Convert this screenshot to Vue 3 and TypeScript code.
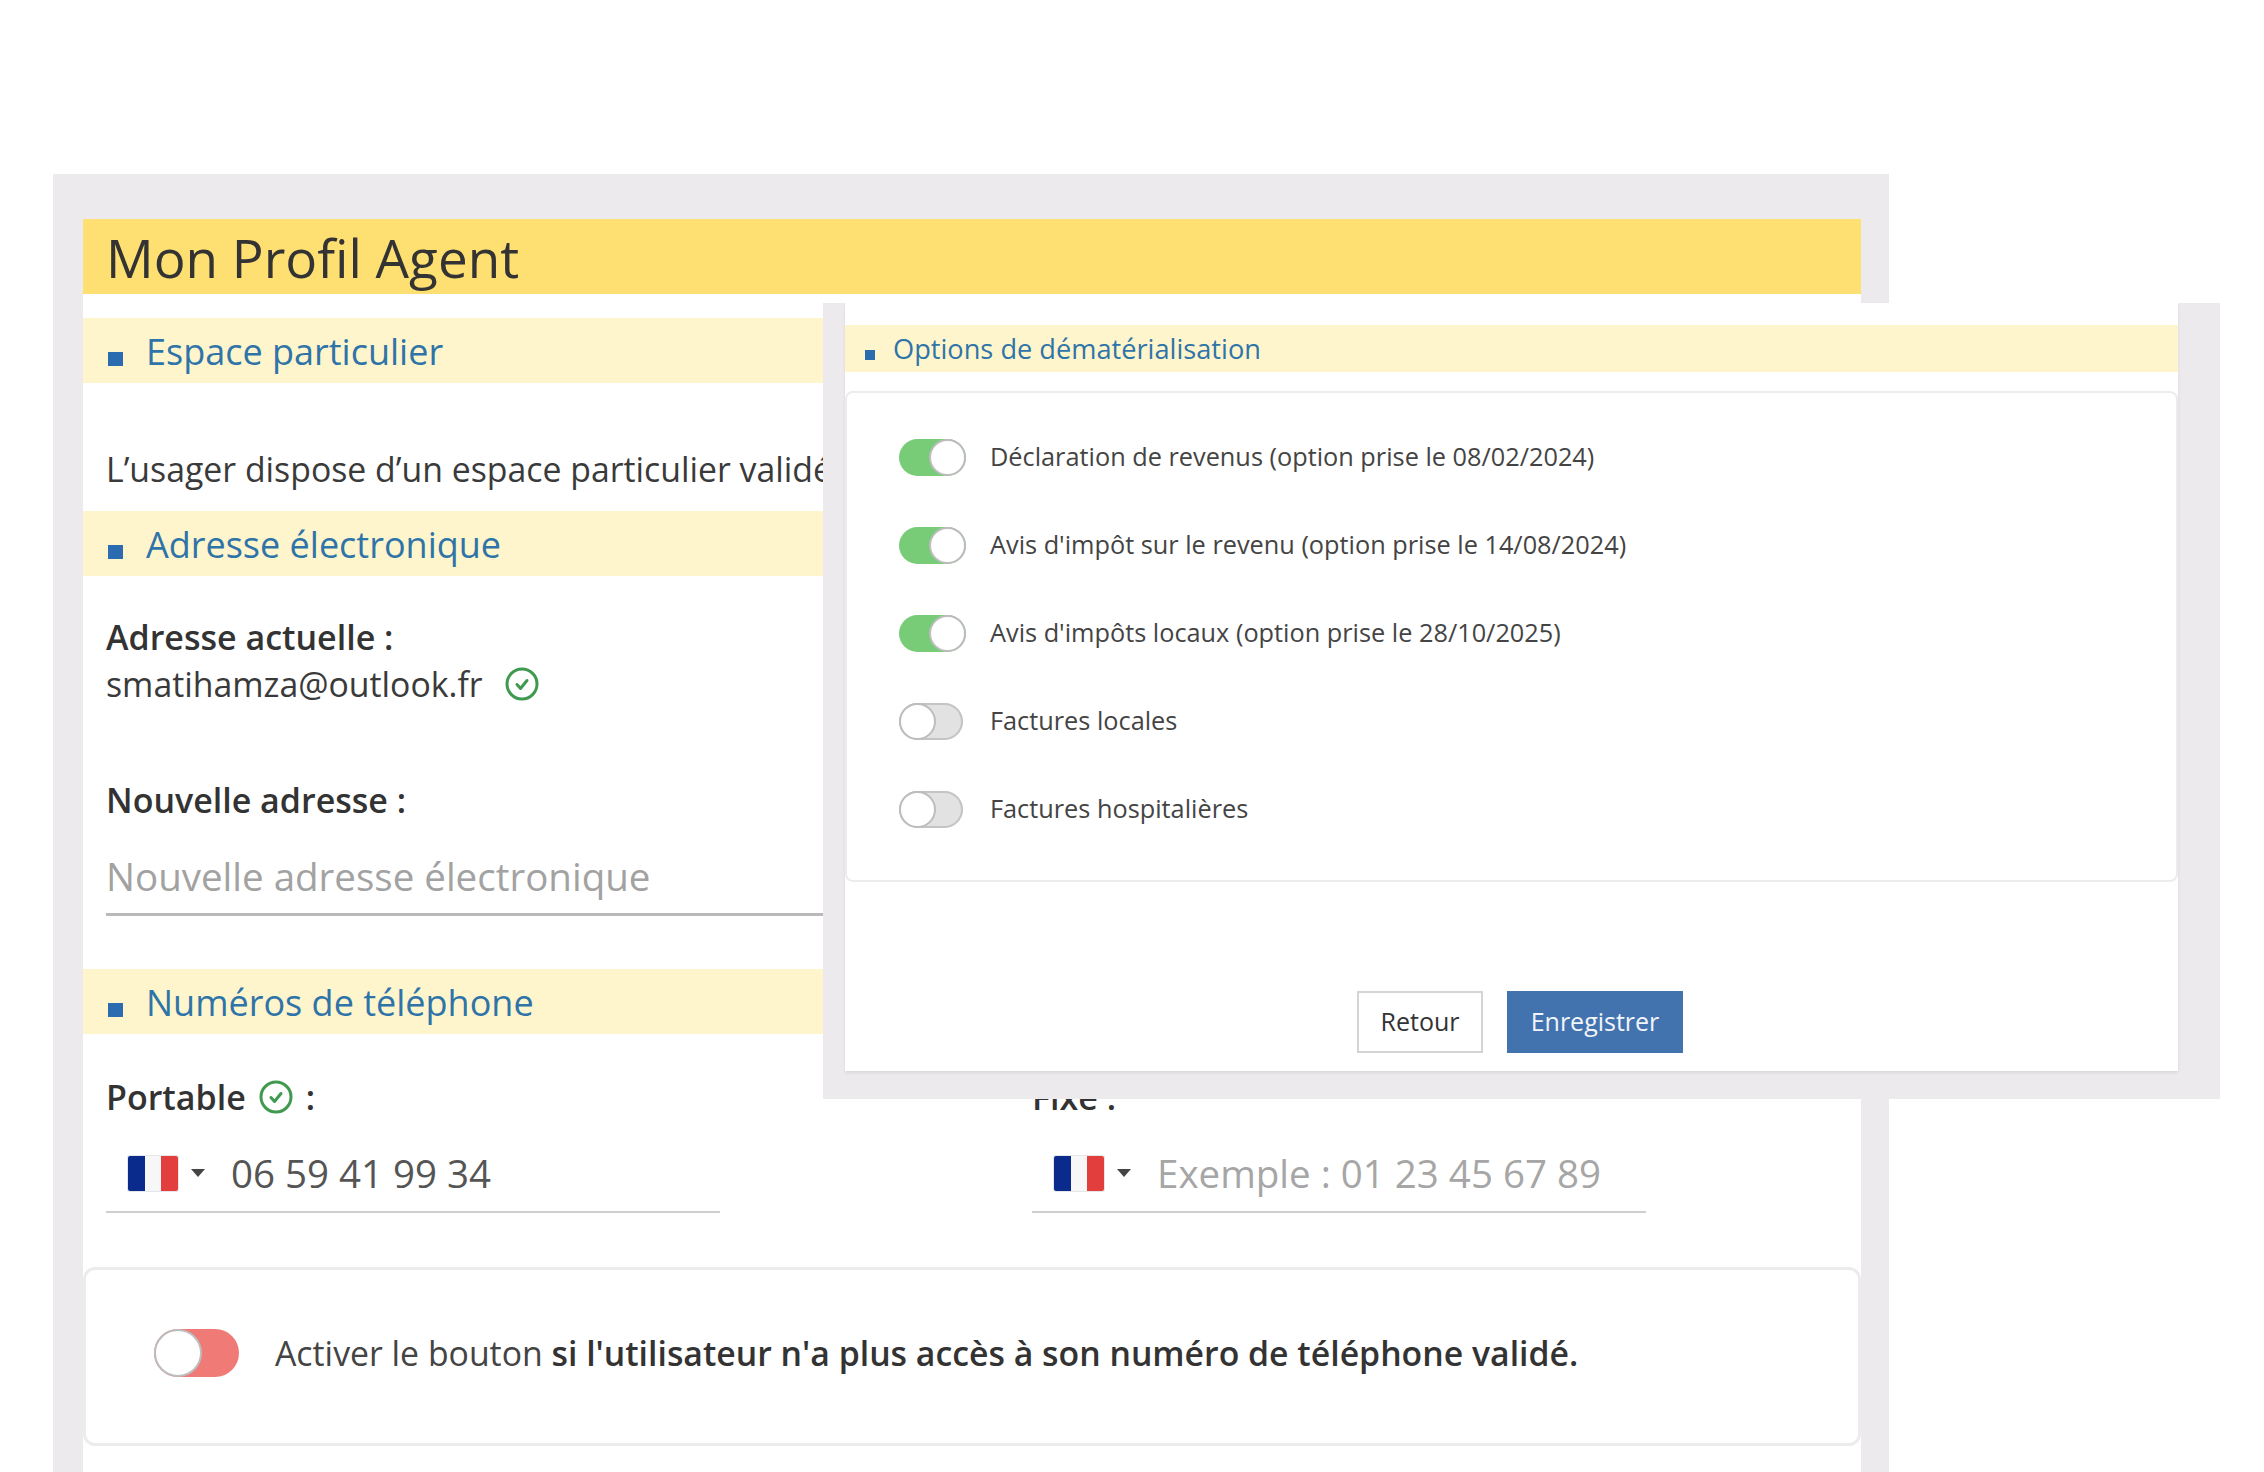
<script setup lang="ts">
interface Option {
  label: string
  on: boolean
}
const options: Option[] = [
  { label: "Déclaration de revenus (option prise le 08/02/2024)", on: true },
  { label: "Avis d'impôt sur le revenu (option prise le 14/08/2024)", on: true },
  { label: "Avis d'impôts locaux (option prise le 28/10/2025)", on: true },
  { label: "Factures locales", on: false },
  { label: "Factures hospitalières", on: false },
]
</script>

<template>
  <div class="page">
    <div class="panel">
      <main class="card">
        <h1 class="title">Mon Profil Agent</h1>

        <h2 class="section first"><i class="mark"></i>Espace particulier</h2>
        <p class="status">L’usager dispose d’un espace particulier validé.</p>

        <h2 class="section"><i class="mark"></i>Adresse électronique</h2>
        <div class="current">
          <div class="label">Adresse actuelle :</div>
          <div class="mail">
            smatihamza@outlook.fr
            <svg class="check mail-check" viewBox="0 0 36 36"><circle cx="18" cy="18" r="15" /><path d="M13 18.5l3.5 4 6.5-8" /></svg>
          </div>
        </div>
        <div class="label new-label">Nouvelle adresse :</div>
        <div class="mail-input">Nouvelle adresse électronique</div>

        <h2 class="section phones-head"><i class="mark"></i>Numéros de téléphone</h2>
        <div class="phones">
          <div class="phone mobile">
            <div class="label phone-label">
              Portable
              <svg class="check" viewBox="0 0 36 36"><circle cx="18" cy="18" r="15" /><path d="M13 18.5l3.5 4 6.5-8" /></svg>
              :
            </div>
            <div class="phone-input">
              <span class="flag"><i class="blue"></i><i class="white"></i><i class="red"></i></span>
              <span class="caret"></span>
              <span class="number">06 59 41 99 34</span>
            </div>
          </div>
          <div class="phone fixed">
            <div class="label phone-label">Fixe :</div>
            <div class="phone-input">
              <span class="flag"><i class="blue"></i><i class="white"></i><i class="red"></i></span>
              <span class="caret"></span>
              <span class="number hint">Exemple : 01 23 45 67 89</span>
            </div>
          </div>
        </div>

        <div class="lost">
          <span class="toggle big"><span class="knob"></span></span>
          <p>Activer le bouton <b>si l'utilisateur n'a plus accès à son numéro de téléphone validé.</b></p>
        </div>
      </main>
    </div>

    <aside class="modal">
      <div class="modal-body">
        <h2 class="modal-head"><i class="mark small"></i>Options de dématérialisation</h2>
        <div class="options">
          <div v-for="o in options" :key="o.label" class="option">
            <span class="toggle" :class="{ on: o.on }"><span class="knob"></span></span>
            <span class="option-text">{{ o.label }}</span>
          </div>
        </div>
        <div class="actions">
          <button class="btn back">Retour</button>
          <button class="btn save">Enregistrer</button>
        </div>
      </div>
    </aside>
  </div>
</template>

<style>
html, body { margin: 0; background: #fff; }
</style>

<style scoped>
.page {
  position: relative;
  height: 1472px;
  overflow: hidden;
  padding: 174px 0 0 53px;
  box-sizing: border-box;
  background: #fff;
  font-family: "Open Sans", "Noto Sans", sans-serif;
  color: #3a3a3a;
}
.panel {
  width: 1836px;
  height: 1298px;
  box-sizing: border-box;
  padding: 45px 28px 0 30px;
  background: #edeaee;
}
.card { height: 100%; background: #fff; overflow: hidden; }
.title {
  margin: 0;
  height: 75px;
  padding-left: 23px;
  background: #fddf72;
  font-size: 53px;
  line-height: 77px;
  font-weight: 400;
  color: #333;
}
.section {
  display: flex;
  align-items: center;
  height: 65px;
  box-sizing: border-box;
  margin: 0;
  padding: 2px 0 0 25px;
  background: #fff5cc;
  font-size: 36px;
  font-weight: 400;
  color: #2f74a8;
}
.first { margin-top: 24px; }
.mark {
  flex: none;
  width: 15px;
  height: 14px;
  margin: 15px 23px 0 0;
  background: #2b6cb0;
}
.mark.small { width: 10px; height: 10px; margin: 12px 18px 0 0; }
.status {
  margin: 0;
  height: 128px;
  box-sizing: border-box;
  padding: 64px 0 0 23px;
  font-size: 33.8px;
  line-height: 44px;
  white-space: nowrap;
}
.current { padding: 39px 0 0 23px; }
.label {
  font-size: 34px;
  line-height: 44px;
  font-weight: 600;
  color: #333;
}
.mail {
  display: flex;
  align-items: center;
  gap: 21px;
  font-size: 33.8px;
  line-height: 50px;
}
.check { width: 36px; height: 36px; flex: none; }
.check circle, .check path {
  fill: none;
  stroke: #3f9a50;
  stroke-width: 3;
}
.check path { stroke-linecap: round; stroke-linejoin: round; }
.new-label { margin: 69px 0 0 23px; }
.mail-input {
  margin: 30px 0 0 23px;
  height: 61px;
  border-bottom: 3px solid #b9b9b9;
  font-size: 38.5px;
  line-height: 48px;
  color: #a2a2a2;
}
.phones-head { margin-top: 53px; }
.phones { display: flex; padding-left: 23px; }
.phone { width: 614px; }
.fixed { margin-left: 312px; }
.phone-label {
  display: flex;
  align-items: center;
  gap: 12px;
  margin-top: 41px;
}
.phone-input {
  display: flex;
  align-items: center;
  height: 79px;
  margin-top: 15px;
  padding-left: 22px;
  box-sizing: border-box;
  border-bottom: 2px solid #cfcfcf;
}
.flag {
  display: flex;
  width: 50px;
  height: 35px;
  border-radius: 2px;
  overflow: hidden;
  flex: none;
  margin-top: 2px;
  box-shadow: 0 0 0 1px #e6e6e8;
}
.flag i { flex: 1; }
.flag .blue { background: #0a2a8c; }
.flag .white { background: #f7f7f7; }
.flag .red { background: #e23e3e; }
.caret {
  width: 0;
  height: 0;
  margin: 0 26px 0 13px;
  border-left: 7px solid transparent;
  border-right: 7px solid transparent;
  border-top: 8px solid #444;
}
.number { font-size: 38.5px; color: #555; }
.hint { color: #a6a6a6; }
.lost {
  display: flex;
  align-items: center;
  gap: 36px;
  height: 179px;
  box-sizing: border-box;
  margin-top: 54px;
  padding: 0 0 8px 68px;
  border: 3px solid #ececec;
  border-radius: 12px;
}
.lost p { margin: 0; font-size: 33.8px; color: #444; white-space: nowrap; }
.lost b { font-weight: 600; color: #333; }
.toggle {
  display: flex;
  flex: none;
  width: 64px;
  height: 37px;
  border-radius: 19px;
  background: #e2e2e2;
  box-sizing: border-box;
  box-shadow: inset 0 0 0 2px #c4c4c4;
}
.knob {
  width: 37px;
  height: 37px;
  box-sizing: border-box;
  border-radius: 50%;
  background: #fff;
  border: 2px solid #bdbdbd;
}
.toggle.on { width: 67px; background: #78cc78; justify-content: flex-end; box-shadow: none; }
.toggle.big { width: 85px; height: 48px; border-radius: 24px; background: #ef7a76; box-shadow: none; }
.toggle.big .knob { width: 48px; height: 48px; }
.modal {
  position: absolute;
  left: 823px;
  top: 303px;
  width: 1397px;
  height: 796px;
  box-sizing: border-box;
  padding: 0 42px 28px 22px;
  background: #edeaee;
}
.modal-body {
  display: flex;
  flex-direction: column;
  height: 100%;
  background: #fff;
  box-shadow: 0 2px 3px rgba(0, 0, 0, 0.08);
}
.modal-head {
  display: flex;
  align-items: center;
  height: 47px;
  margin: 22px 0 0;
  padding-left: 20px;
  background: #fff5cc;
  font-size: 27.2px;
  font-weight: 400;
  color: #2f74a8;
}
.options {
  height: 491px;
  box-sizing: border-box;
  margin-top: 19px;
  padding: 46px 0 0 52px;
  border: 2px solid #ececec;
  border-radius: 8px;
}
.option {
  display: flex;
  align-items: center;
  gap: 24px;
  height: 37px;
  margin-bottom: 51px;
  font-size: 25.3px;
  color: #444;
  white-space: nowrap;
}
.option-text { padding-bottom: 3px; }
.option .toggle:not(.on) { margin-right: 3px; }
.actions {
  display: flex;
  gap: 24px;
  margin: 109px 0 0 512px;
}
.btn {
  height: 62px;
  border: 0;
  font: 25px "Open Sans", sans-serif;
  padding: 0 0 2px;
}
.back {
  width: 126px;
  background: #fff;
  border: 2px solid #d4d4d4;
  color: #333;
}
.save { width: 176px; background: #4373ae; color: #f2f5fa; }
</style>
